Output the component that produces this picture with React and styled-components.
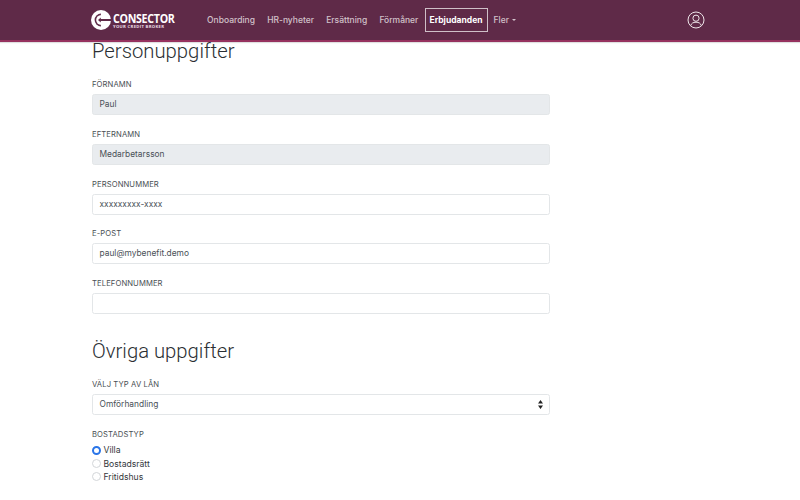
import React from "react";
import styled, { createGlobalStyle } from "styled-components";

const Global = createGlobalStyle`
  html, body { margin: 0; padding: 0; background: #fff; }
  body { font-family: Inter, "Liberation Sans", sans-serif; color: #212529; }
`;
const Page = styled.div`
  width: 800px; height: 500px; overflow: hidden; position: relative;
  display: flex; flex-direction: column;
`;
const NavBar = styled.header`
  flex: none; height: 40px; background: #5f2a48; border-bottom: 2px solid #96325f;
  box-shadow: 0 1px 1px rgba(0,0,0,.12);
  display: flex; align-items: center; padding-left: 91px; box-sizing: content-box;
`;
const Logo = styled.div`
  display: flex; align-items: center; gap: 2px; width: 110px; flex: none;
`;
const LogoText = styled.div`
  display: flex; flex-direction: column; color: #fff; margin-top: 1px;
`;
const LogoName = styled.span`
  display: block; height: 11px; font: 700 12px/11px "Open Sans", sans-serif; letter-spacing: -.35px;
  transform: scaleX(.89); transform-origin: left; white-space: nowrap;
`;
const LogoSub = styled.span`
  display: block; height: 5px; font: 700 4.2px/5px "Open Sans", sans-serif; letter-spacing: .32px; color: #eadfe5; white-space: nowrap;
`;
const Menu = styled.nav`
  display: flex; align-items: center; gap: 0;
`;
const MenuItem = styled.a`
  font-size: 8.5px; font-weight: ${p => (p.$active ? 700 : 500)};
  color: ${p => (p.$active ? "#fff" : "rgba(255,255,255,.72)")};
  height: 24px; padding: 0 ${p => (p.$active ? 4 : 5.1)}px; box-sizing: border-box;
  border: 1px solid ${p => (p.$active ? "rgba(255,255,255,.7)" : "transparent")};
  white-space: nowrap; display: flex; align-items: center; gap: 3px;
`;
const Caret = styled.span`
  width: 0; height: 0; border-left: 2.5px solid transparent; border-right: 2.5px solid transparent;
  border-top: 2.5px solid currentColor; margin-top: -1px;
`;
const Avatar = styled.div`
  margin-left: auto; margin-right: 95px; display: flex; align-items: center;
`;
const Main = styled.main`
  padding-left: 92px; width: 458px; margin-top: -4px;
`;
const H = styled.h2`
  margin: ${p => p.$top || 0}px 0 ${p => p.$bottom || 0}px; font: 300 20.3px/26px Roboto, sans-serif; color: #2b2f33;
  white-space: nowrap;
`;
const Field = styled.div`
  height: 49.75px; display: flex; flex-direction: column;
`;
const Label = styled.label`
  display: block; font-size: 7.65px; line-height: 12px; height: 12px; margin-bottom: 3px; color: #4a4f54; letter-spacing: .1px; text-transform: uppercase;
`;
const LastLabel = styled(Label)`
  margin-top: 15px;
`;
const Input = styled.div`
  box-sizing: border-box; height: 21px; border: 1px solid #e3e6e8; border-radius: 2.5px;
  background: ${p => (p.$disabled ? "#e9ecef" : "#fff")}; padding: 0 6.5px;
  font-size: 8.4px; line-height: 19px; color: #495057; display: flex; align-items: center; justify-content: space-between;
`;
const Radios = styled.div`
  display: flex; flex-direction: column; margin-top: 0;
`;
const RadioRow = styled.div`
  display: flex; align-items: center; gap: 2.5px; height: 13.4px; font-size: 8.6px; color: #33373b;
`;
const Radio = styled.span`
  width: 9px; height: 9px; border-radius: 50%; box-sizing: border-box;
  background: #fff; border: ${p => (p.$on ? "2.7px solid #2a75e8" : "1px solid #d3d6d9")};
`;

const Mark = () => (
  <svg width="20" height="20" viewBox="0 0 20 20">
    <circle cx="10" cy="10" r="10" fill="#fff" />
    <path d="M10 3.6A6.4 6.4 0 0 0 3.6 10H9.2z" fill="#5f2a48" />
    <path d="M10 16.4A6.4 6.4 0 0 1 3.6 10H9.2z" fill="#5f2a48" />
    <path d="M10 5.2A4.8 4.8 0 0 0 5.2 10 4.8 4.8 0 0 0 10 14.8z" fill="#fff" />
    <path d="M9.8 7.6 7 10l2.8 2.4V10.9H20V9.1H9.8z" fill="#5f2a48" />
  </svg>
);
const UserIcon = () => (
  <svg width="18" height="18" viewBox="0 0 18 18" fill="none" stroke="#efe6ea" strokeWidth="1">
    <circle cx="9" cy="9" r="8" />
    <circle cx="9" cy="7.2" r="3.1" />
    <path d="M3.7 14.6c.7-2.3 2.4-3.4 5.3-3.4s4.6 1.1 5.3 3.4" />
  </svg>
);
const SelectArrows = () => (
  <svg width="5" height="9" viewBox="0 0 5 9" fill="#222">
    <path d="M2.5 0 5 3.4H0zM2.5 9 0 5.6h5z" />
  </svg>
);

const personal = [
  ["Förnamn", "Paul", true],
  ["Efternamn", "Medarbetarsson", true],
  ["Personnummer", "xxxxxxxxx-xxxx", false],
  ["E-post", "paul@mybenefit.demo", false],
  ["Telefonnummer", "", false],
];

export default function App() {
  return (
    <Page>
      <Global />
      <NavBar>
        <Logo>
          <Mark />
          <LogoText>
            <LogoName>CONSECTOR</LogoName>
            <LogoSub>YOUR CREDIT BROKER</LogoSub>
          </LogoText>
        </Logo>
        <Menu>
          <MenuItem>Onboarding</MenuItem>
          <MenuItem>HR-nyheter</MenuItem>
          <MenuItem>Ersättning</MenuItem>
          <MenuItem>Förmåner</MenuItem>
          <MenuItem $active>Erbjudanden</MenuItem>
          <MenuItem>Fler<Caret /></MenuItem>
        </Menu>
        <Avatar><UserIcon /></Avatar>
      </NavBar>
      <Main>
        <H $bottom={15}>Personuppgifter</H>
        {personal.map(([l, v, d]) => (
          <Field key={l}>
            <Label>{l}</Label>
            <Input $disabled={d}>{v}</Input>
          </Field>
        ))}
        <H $top={10} $bottom={15}>Övriga uppgifter</H>
        <Field>
          <Label>Välj typ av lån</Label>
          <Input>Omförhandling<SelectArrows /></Input>
        </Field>
        <Label as="div">Bostadstyp</Label>
        <Radios>
          <RadioRow><Radio $on />Villa</RadioRow>
          <RadioRow><Radio />Bostadsrätt</RadioRow>
          <RadioRow><Radio />Fritidshus</RadioRow>
        </Radios>
        <LastLabel as="div">Bostadens pris</LastLabel>
      </Main>
    </Page>
  );
}
